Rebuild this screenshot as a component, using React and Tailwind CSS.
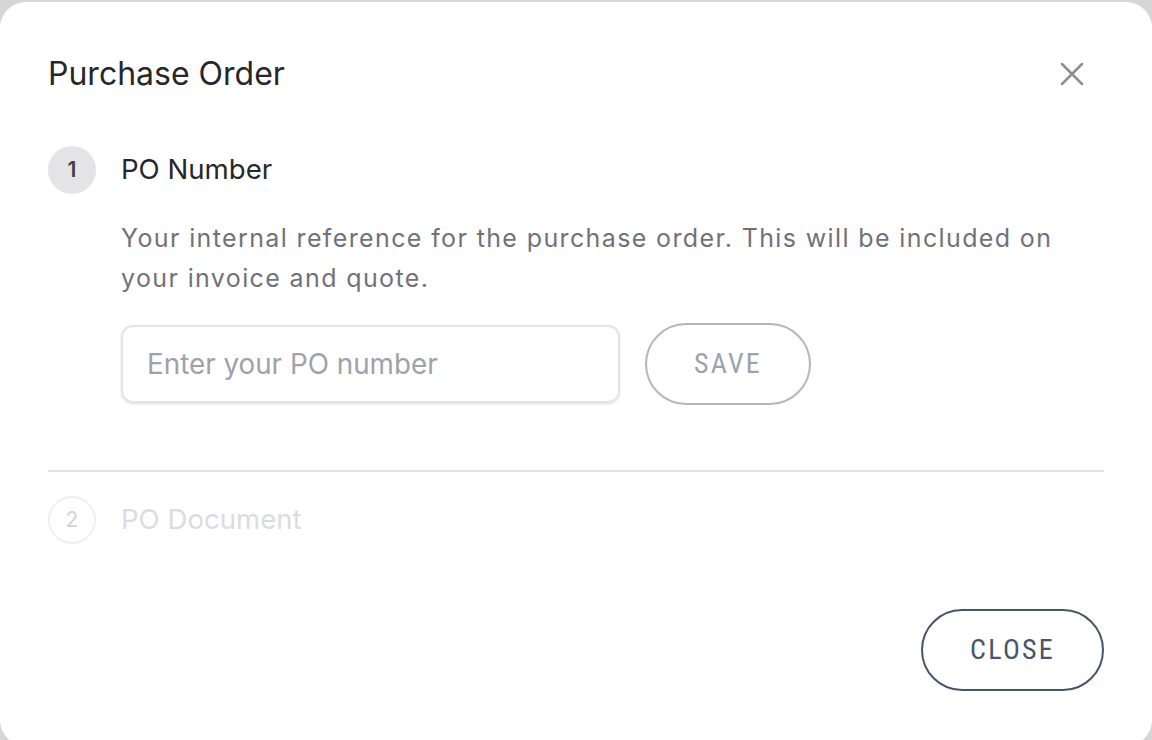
import { X } from 'lucide-react'

const inter = { fontFamily: 'Inter, "Noto Sans", sans-serif' }
const condensed = {
  fontFamily: 'Roboto, "Liberation Sans Narrow", "DejaVu Sans Condensed", sans-serif',
  fontStretch: '75%',
}

function StepBadge({ n, active }) {
  return (
    <div
      className={
        active
          ? 'flex h-[48px] w-[48px] items-center justify-center rounded-full bg-[#e4e4e7] text-[21px] font-semibold text-[#3f3f46]'
          : 'flex h-[48px] w-[48px] items-center justify-center rounded-full border-2 border-[#f0f0f2] text-[21px] text-[#d4d4d8]'
      }
    >
      {n}
    </div>
  )
}

export default function App() {
  return (
    <div className="h-screen w-screen overflow-hidden bg-[#d6d6d6] pt-[2px]" style={inter}>
      <div className="flex h-[744px] flex-col rounded-[26px] bg-white px-[48px] pt-[52px]">
        {/* Header */}
        <div className="flex h-[40px] items-center justify-between">
          <h1 className="text-[32px] font-normal text-[#27272a]">Purchase Order</h1>
          <button className="mr-[12px] flex h-[40px] w-[40px] items-center justify-center text-[#8e8e96]">
            <X size={40} strokeWidth={1.5} />
          </button>
        </div>

        {/* Step 1 */}
        <div className="mt-[52px] flex h-[48px] items-center gap-[25px]">
          <StepBadge n={1} active />
          <span className="text-[27.6px] text-[#27272a]">PO Number</span>
        </div>
        <div className="pl-[73px]">
          <p className="mt-[24px] max-w-[960px] text-[25px] leading-[40px] tracking-[0.055em] text-[#71717a]">
            Your internal reference for the purchase order. This will be included on your invoice and quote.
          </p>
          <div className="mt-[25px] flex h-[82px] items-center gap-[25px]">
            <input
              placeholder="Enter your PO number"
              className="h-[78px] w-[499px] rounded-[12px] border-2 border-[#e4e4e7] px-[24px] text-[27.8px] text-[#3f3f46] shadow-sm outline-none placeholder:text-[#a1a1aa]"
            />
            <button
              className="h-[82px] w-[166px] rounded-full border-2 border-[#b4b7c0] text-[28px] tracking-[0.08em] text-[#9ca3af]"
              style={condensed}
            >
              SAVE
            </button>
          </div>
        </div>

        <div className="mt-[65px] h-[2px] bg-[#e4e4e7]" />

        {/* Step 2 */}
        <div className="mt-[24px] flex h-[48px] items-center gap-[25px]">
          <StepBadge n={2} />
          <span className="text-[27.6px] text-[#dcdce0]">PO Document</span>
        </div>

        <div className="mt-[65px] flex justify-end">
          <button
            className="h-[82px] w-[183px] rounded-full border-2 border-[#475569] text-[28px] tracking-[0.08em] text-[#475569]"
            style={condensed}
          >
            CLOSE
          </button>
        </div>
      </div>
    </div>
  )
}
